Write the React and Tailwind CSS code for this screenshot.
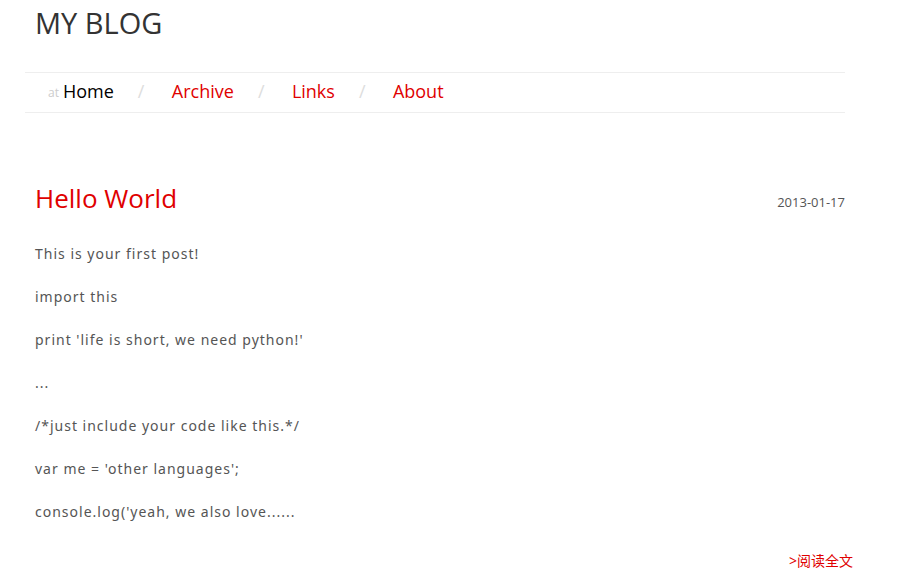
const navItems = [
  { label: "Home", current: true },
  { label: "Archive" },
  { label: "Links" },
  { label: "About" },
];

const lines = [
  "This is your first post!",
  "import this",
  "print 'life is short, we need python!'",
  "...",
  "/*just include your code like this.*/",
  "var me = 'other languages';",
  "console.log('yeah, we also love......",
];

export default function App() {
  return (
    <div className="bg-white pl-[25px] pr-[54px] font-['Noto_Sans','Noto_Sans_CJK_SC',sans-serif] text-[#555]">
      <header>
        <h1 className="pl-[10px] pt-[3px] font-['Open_Sans',sans-serif] text-[29px] leading-10 text-[#333]">MY BLOG</h1>
        <nav className="mt-[29px] flex h-[41px] items-center border-y border-[#eee] pb-1 pl-[23px] font-['Open_Sans',sans-serif] text-lg">
          <span className="mr-1 pt-1 text-xs text-[#ccc]">at</span>
          {navItems.map((item, i) => (
            <div key={item.label} className="flex items-center">
              {i > 0 && <span className="w-[34px] text-[#ddd]">/</span>}
              <a href="#" className={item.current ? "mr-6 text-black" : "mr-6 text-[#e00000]"}>{item.label}</a>
            </div>
          ))}
        </nav>
      </header>
      <main className="pl-[10px] pt-[65px]">
        <article>
          <div className="flex items-center justify-between">
            <h2 className="font-['Open_Sans',sans-serif] text-[26px] leading-10 text-[#e00000]"><a href="#">Hello World</a></h2>
            <time dateTime="2013-01-17" className="pt-[10px] font-['Open_Sans',sans-serif] text-[13px]">2013-01-17</time>
          </div>
          <div className="mt-6 flex flex-col gap-[19px] text-sm leading-6 tracking-[1px]">
            {lines.map((line) => <p key={line}>{line}</p>)}
          </div>
          <div className="-mr-2 mt-[27px] text-right text-sm text-[#e00000]"><a href="#">&gt;阅读全文</a></div>
        </article>
      </main>
    </div>
  );
}
